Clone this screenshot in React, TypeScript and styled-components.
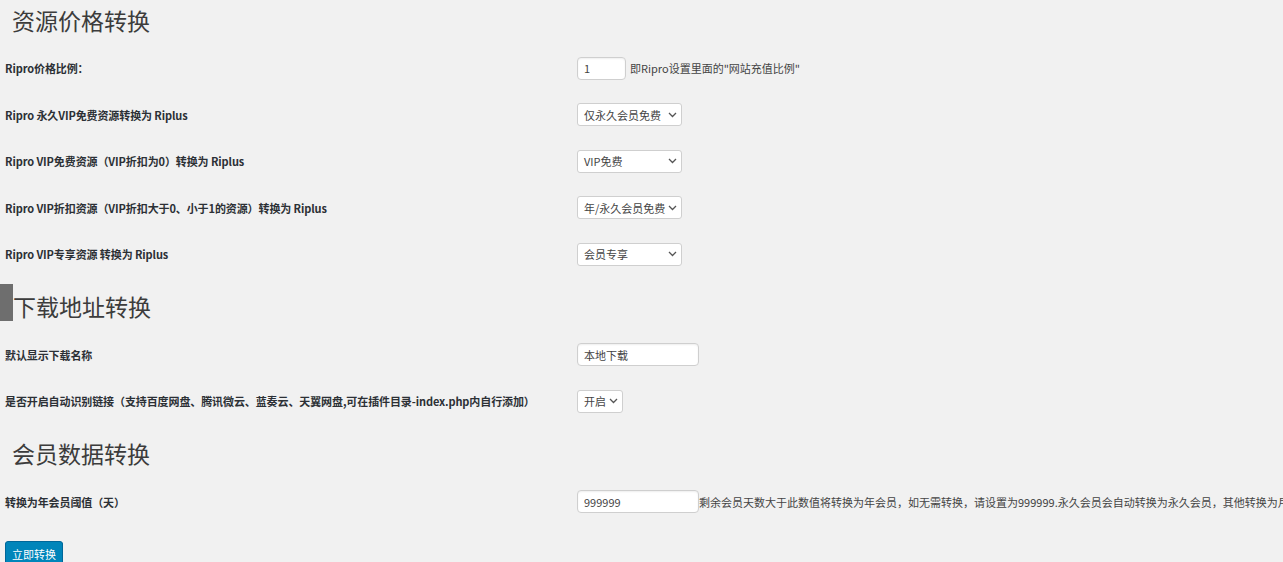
import React from 'react'
import styled, { createGlobalStyle } from 'styled-components'

const GlobalStyle = createGlobalStyle`
  html, body {
    margin: 0;
    padding: 0;
    background: #f1f1f1;
    overflow: hidden;
  }
  body {
    font-family: "Noto Sans CJK SC", "Liberation Sans", sans-serif;
    color: #23282d;
  }
`

const Page = styled.div`
  width: 1283px;
  height: 562px;
  overflow: hidden;
`

const Heading = styled.h2<{ $indent?: boolean; $first?: boolean }>`
  display: flex;
  align-items: center;
  height: 40px;
  margin: ${p => (p.$first ? '0 0 5px' : '9px 0 5px')};
  padding-left: ${p => (p.$indent ? '12px' : '0')};
  font-size: 23px;
  font-weight: 400;
  color: #3c3c3c;
  line-height: 1;
`

const Marker = styled.span`
  align-self: flex-start;
  width: 13px;
  height: 37px;
  margin-top: -3px;
  background: #6e6e6e;
  flex: none;
`

const Row = styled.div`
  display: grid;
  grid-template-columns: 572px 1fr;
  align-items: center;
  min-height: 46.5px;
  padding-left: 5px;
`

const Label = styled.div`
  font-size: 11px;
  font-weight: 700;
  color: #2c3035;
  white-space: nowrap;
  letter-spacing: -0.1px;
`

const Field = styled.div`
  display: flex;
  align-items: center;
  white-space: nowrap;
`

const TextInput = styled.input<{ $w: number }>`
  box-sizing: border-box;
  width: ${p => p.$w}px;
  height: 23px;
  padding: 0 6px;
  border: 1px solid #cfcfcf;
  border-radius: 4px;
  background: #fff;
  box-shadow: inset 0 1px 2px rgba(0, 0, 0, 0.07);
  font-family: inherit;
  font-size: 11px;
  color: #444;
  outline: none;
`

const Desc = styled.span<{ $gap?: number }>`
  margin-left: ${p => p.$gap ?? 0}px;
  font-size: 11px;
  color: #444;
`

const SelectBox = styled.div<{ $w: number }>`
  box-sizing: border-box;
  display: flex;
  align-items: center;
  justify-content: space-between;
  width: ${p => p.$w}px;
  height: 23px;
  padding: 0 4px 0 6px;
  border: 1px solid #cfcfcf;
  border-radius: 3px;
  background: #fff;
  font-size: 11px;
  color: #444;
  gap: 3px;

  svg {
    flex: none;
  }
`

const Chevron = () => (
  <svg width="9" height="6" viewBox="0 0 9 6" fill="none">
    <path d="M1 1l3.5 3.5L8 1" stroke="#555" strokeWidth="1.3" />
  </svg>
)

const Select = ({ value, w }: { value: string; w: number }) => (
  <SelectBox $w={w}>
    <span>{value}</span>
    <Chevron />
  </SelectBox>
)

const Button = styled.button`
  margin: 15.75px 0 0 5px;
  height: 26px;
  padding: 0 6px;
  border: 1px solid #006799;
  border-radius: 3px;
  background: #0085ba;
  color: #fff;
  font-family: inherit;
  font-size: 11px;
  box-shadow: 0 1px 0 #006799;
  cursor: pointer;
`

const App = () => {
  return (
    <Page>
      <GlobalStyle />
      <Heading $first $indent>资源价格转换</Heading>
      <Row>
        <Label>Ripro价格比例：</Label>
        <Field>
          <TextInput $w={49} defaultValue="1" />
          <Desc $gap={4}>即Ripro设置里面的"网站充值比例"</Desc>
        </Field>
      </Row>
      <Row>
        <Label>Ripro 永久VIP免费资源转换为 Riplus</Label>
        <Field><Select w={105} value="仅永久会员免费" /></Field>
      </Row>
      <Row>
        <Label>Ripro VIP免费资源（VIP折扣为0）转换为 Riplus</Label>
        <Field><Select w={105} value="VIP免费" /></Field>
      </Row>
      <Row>
        <Label>Ripro VIP折扣资源（VIP折扣大于0、小于1的资源）转换为 Riplus</Label>
        <Field><Select w={105} value="年/永久会员免费" /></Field>
      </Row>
      <Row>
        <Label>Ripro VIP专享资源 转换为 Riplus</Label>
        <Field><Select w={105} value="会员专享" /></Field>
      </Row>

      <Heading><Marker />下载地址转换</Heading>
      <Row>
        <Label>默认显示下载名称</Label>
        <Field><TextInput $w={122} defaultValue="本地下载" /></Field>
      </Row>
      <Row>
        <Label>是否开启自动识别链接（支持百度网盘、腾讯微云、蓝奏云、天翼网盘,可在插件目录-index.php内自行添加）</Label>
        <Field><Select w={46} value="开启" /></Field>
      </Row>

      <Heading $indent>会员数据转换</Heading>
      <Row>
        <Label>转换为年会员阈值（天）</Label>
        <Field>
          <TextInput $w={122} defaultValue="999999" />
          <Desc>剩余会员天数大于此数值将转换为年会员，如无需转换，请设置为999999.永久会员会自动转换为永久会员，其他转换为月会员</Desc>
        </Field>
      </Row>
      <Button>立即转换</Button>
    </Page>
  )
}

export default App
